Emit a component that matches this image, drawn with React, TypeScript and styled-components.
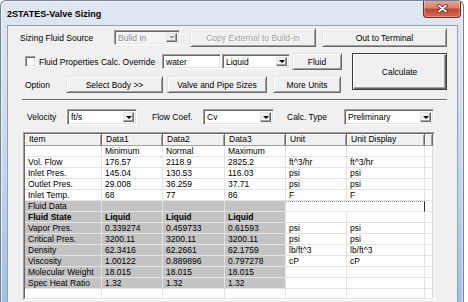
import React from "react";
import styled, { createGlobalStyle } from "styled-components";

const FONT = `"Liberation Sans", Arial, sans-serif`;

const GlobalStyle = createGlobalStyle`
  html, body {
    margin: 0;
    padding: 0;
    background: #fff;
    overflow: hidden;
    font-family: ${FONT};
  }
`;

const Window = styled.div`
  width: 464px;
  height: 302px;
  box-sizing: border-box;
  border: 1px solid #6f8297;
  border-bottom: none;
  border-radius: 6px 6px 0 0;
  background: linear-gradient(180deg, #dfe7f0 0%, #d6e0eb 30%, #c2d4e8 60%, #a2c0e4 100%);
  box-shadow: inset 1px 1px 0 rgba(255, 255, 255, 0.7), inset -1px 0 0 rgba(255, 255, 255, 0.6);
  display: flex;
  flex-direction: column;
  overflow: hidden;
`;

const TitleBar = styled.div`
  height: 24px;
  flex: none;
  display: flex;
  align-items: flex-start;
  justify-content: space-between;
  padding-left: 6px;
`;

const Title = styled.span`
  font: bold 9px ${FONT};
  line-height: 10px;
  color: #000;
  margin-top: 8px;
`;

const CloseButton = styled.div`
  width: 38px;
  height: 18px;
  box-sizing: border-box;
  margin: -1px 2px 0 0;
  border: 1px solid #6b2a22;
  border-top: none;
  border-radius: 0 0 4px 4px;
  background: linear-gradient(180deg, #eaa99b 0%, #d98270 45%, #c2462f 55%, #d06b54 100%);
  box-shadow: inset 0 0 0 1px rgba(255, 255, 255, 0.3);
  display: flex;
  align-items: center;
  justify-content: center;
`;

const Client = styled.div`
  flex: 1;
  min-height: 0;
  overflow: hidden;
  margin: 0 5px 0 6px;
  border: 1px solid #8ea2b8;
  border-bottom: none;
  background: #f0f0f0;
  padding: 2px 0 0 12px;
  color: #000;
  font: 8.5px ${FONT};
`;

const Row = styled.div<{ $h: number; $ml?: number; $mt?: number }>`
  display: flex;
  align-items: center;
  height: ${(p) => p.$h}px;
  margin-left: ${(p) => p.$ml ?? 0}px;
  margin-top: ${(p) => p.$mt ?? 0}px;
`;

const OptionBlock = styled.div`
  display: flex;
  align-items: flex-start;
  margin-top: 6px;
`;

const OptionRows = styled.div`
  display: flex;
  flex-direction: column;
  gap: 6px;
`;

const Label = styled.span<{ $w: number; $ml?: number }>`
  width: ${(p) => p.$w}px;
  margin-left: ${(p) => p.$ml ?? 0}px;
  flex: none;
  white-space: nowrap;
  line-height: 10px;
`;

const PushButton = styled.div<{ $w: number; $h: number; $ml?: number; $disabled?: boolean }>`
  width: ${(p) => p.$w}px;
  height: ${(p) => p.$h}px;
  margin-left: ${(p) => p.$ml ?? 0}px;
  flex: none;
  box-sizing: border-box;
  background: #f0f0f0;
  border: 1px solid;
  border-color: #e3e3e3 #696969 #696969 #e3e3e3;
  box-shadow: inset 1px 1px 0 #fff, inset -1px -1px 0 #a0a0a0;
  display: flex;
  align-items: center;
  justify-content: center;
  white-space: nowrap;
  color: ${(p) => (p.$disabled ? "#a0a0a0" : "#000")};
  text-shadow: ${(p) => (p.$disabled ? "1px 1px 0 #fff" : "none")};
`;

const DefaultButton = styled(PushButton)`
  border-color: #3c3c3c;
  box-shadow: inset 1px 1px 0 #fff, inset -1px -1px 0 #696969, inset -2px -2px 0 #a0a0a0;
`;

const Sunken = styled.div<{ $w: number; $h: number; $ml?: number; $disabled?: boolean }>`
  width: ${(p) => p.$w}px;
  height: ${(p) => p.$h}px;
  margin-left: ${(p) => p.$ml ?? 0}px;
  flex: none;
  box-sizing: border-box;
  background: ${(p) => (p.$disabled ? "#f4f4f4" : "#fff")};
  border: 1px solid;
  border-color: #a0a0a0 #fff #fff #a0a0a0;
  box-shadow: inset 1px 1px 0 #696969, inset -1px -1px 0 #e3e3e3;
  padding: 2px;
  display: flex;
  align-items: stretch;
`;

const FieldText = styled.span<{ $disabled?: boolean }>`
  flex: 1;
  padding-left: 1px;
  line-height: ${(p) => (p.$disabled ? 10 : 11)}px;
  white-space: nowrap;
  overflow: hidden;
  color: ${(p) => (p.$disabled ? "#8c8c8c" : "#000")};
`;

const DropArrow = styled.span<{ $disabled?: boolean }>`
  width: 11px;
  flex: none;
  box-sizing: border-box;
  background: #f0f0f0;
  border: 1px solid;
  border-color: #e3e3e3 #696969 #696969 #e3e3e3;
  box-shadow: inset -1px -1px 0 #a0a0a0;
  display: flex;
  align-items: center;
  justify-content: center;
  &::after {
    content: "";
    border-left: 3px solid transparent;
    border-right: 3px solid transparent;
    border-top: 3px solid ${(p) => (p.$disabled ? "#a0a0a0" : "#000")};
  }
`;

const CheckBox = styled.span`
  width: 11px;
  height: 11px;
  flex: none;
  box-sizing: border-box;
  margin-left: 5px;
  background: #fff;
  border: 1px solid;
  border-color: #a0a0a0 #fff #fff #a0a0a0;
  box-shadow: inset 1px 1px 0 #696969, inset -1px -1px 0 #e3e3e3;
`;

const Separator = styled.div`
  width: 425px;
  height: 2px;
  box-sizing: border-box;
  margin: 6px 0 0 2px;
  border-top: 1px solid #6d6d6d;
  border-bottom: 1px solid #fff;
`;

const Grid = styled.div`
  width: 412px;
  height: 168px;
  box-sizing: border-box;
  margin: 7px 0 0 3px;
  border: 1px solid;
  border-color: #a0a0a0 #fff #fff #a0a0a0;
  background: #fff;
`;

const GridBody = styled.div`
  height: 100%;
  box-sizing: border-box;
  border: 1px solid;
  border-color: #696969 #e3e3e3 #e3e3e3 #696969;
  display: grid;
  grid-template-columns: 77px 61px 62px 61px 61px 78px 8px;
  grid-template-rows: 12px;
  grid-auto-rows: 11px;
  overflow: hidden;
`;

const HeaderCell = styled.div`
  box-sizing: border-box;
  background: #f0f0f0;
  border-right: 1px solid #696969;
  border-bottom: 1px solid #a0a0a0;
  box-shadow: inset 1px 1px 0 #fff, inset -1px 0 0 #a0a0a0;
  padding-left: 4px;
  line-height: 11px;
  white-space: nowrap;
  overflow: hidden;
`;

const Cell = styled.div<{ $gray?: boolean; $bold?: boolean }>`
  box-sizing: border-box;
  background: ${(p) => (p.$gray ? "#c3c3c3" : "#fff")};
  border-right: 1px solid #e3e3e3;
  border-bottom: 1px solid #e3e3e3;
  padding-left: 3px;
  line-height: 10px;
  font-weight: ${(p) => (p.$bold ? "bold" : "normal")};
  white-space: nowrap;
  overflow: hidden;
`;

const FocusCell = styled(Cell)`
  grid-column: span 2;
  border-top: 1px dotted #8a8a8a;
  border-right: 1px solid #2a2a2a;
  line-height: 9px;
`;

type GridRow = {
  cells: string[];
  gray?: boolean;
  bold?: boolean;
  focus?: boolean;
};

const headers = ["Item", "Data1", "Data2", "Data3", "Unit", "Unit Display", ""];

const rows: GridRow[] = [
  { cells: ["", "Minimum", "Normal", "Maximum", "", ""] },
  { cells: ["Vol. Flow", "176.57", "2118.9", "2825.2", "ft^3/hr", "ft^3/hr"] },
  { cells: ["Inlet Pres.", "145.04", "130.53", "116.03", "psi", "psi"] },
  { cells: ["Outlet Pres.", "29.008", "36.259", "37.71", "psi", "psi"] },
  { cells: ["Inlet Temp.", "68", "77", "86", "F", "F"] },
  { cells: ["Fluid Data", "", "", "", "", ""], gray: true, focus: true },
  { cells: ["Fluid State", "Liquid", "Liquid", "Liquid", "", ""], gray: true, bold: true },
  { cells: ["Vapor Pres.", "0.339274", "0.459733", "0.61593", "psi", "psi"], gray: true },
  { cells: ["Critical Pres.", "3200.11", "3200.11", "3200.11", "psi", "psi"], gray: true },
  { cells: ["Density", "62.3416", "62.2661", "62.1759", "lb/ft^3", "lb/ft^3"], gray: true },
  { cells: ["Viscosity", "1.00122", "0.889896", "0.797278", "cP", "cP"], gray: true },
  { cells: ["Molecular Weight", "18.015", "18.015", "18.015", "", ""], gray: true },
  { cells: ["Spec Heat Ratio", "1.32", "1.32", "1.32", "", ""], gray: true },
  { cells: ["", "", "", "", "", ""] },
];

function Combo({ w, h, value, ml, disabled }: { w: number; h: number; value: string; ml?: number; disabled?: boolean }) {
  return (
    <Sunken $w={w} $h={h} $ml={ml} $disabled={disabled}>
      <FieldText $disabled={disabled}>{value}</FieldText>
      <DropArrow $disabled={disabled} />
    </Sunken>
  );
}

function CloseGlyph() {
  return (
    <svg width="11" height="9" viewBox="0 0 11 9">
      <path d="M2 1.5 L9 7.5 M9 1.5 L2 7.5" stroke="#5a1d16" strokeWidth="3.4" strokeLinecap="round" />
      <path d="M2 1.5 L9 7.5 M9 1.5 L2 7.5" stroke="#fff" strokeWidth="1.8" strokeLinecap="round" />
    </svg>
  );
}

export default function App() {
  return (
    <>
      <GlobalStyle />
      <Window>
        <TitleBar>
          <Title>2STATES-Valve Sizing</Title>
          <CloseButton>
            <CloseGlyph />
          </CloseButton>
        </TitleBar>
        <Client>
          <Row $h={19}>
            <Label $w={94}>Sizing Fluid Source</Label>
            <Combo w={66} h={15} value="Bulid In" disabled />
            <PushButton $w={126} $h={19} $ml={10} $disabled>
              Copy External to Build-in
            </PushButton>
            <PushButton $w={125} $h={19} $ml={6}>
              Out to Terminal
            </PushButton>
          </Row>

          <OptionBlock>
            <OptionRows>
              <Row $h={17}>
                <CheckBox />
                <Label $w={123} $ml={3}>
                  Fluid Properties Calc. Override
                </Label>
                <Sunken $w={59} $h={15}>
                  <FieldText>water</FieldText>
                </Sunken>
                <Combo w={68} h={15} value="Liquid" ml={1} />
                <PushButton $w={50} $h={17} $ml={2}>
                  Fluid
                </PushButton>
              </Row>
              <Row $h={17}>
                <Label $w={41} $ml={5}>
                  Option
                </Label>
                <PushButton $w={97} $h={17}>
                  Select Body &gt;&gt;
                </PushButton>
                <PushButton $w={100} $h={17} $ml={4}>
                  Valve and Pipe Sizes
                </PushButton>
                <PushButton $w={68} $h={17} $ml={6}>
                  More Units
                </PushButton>
              </Row>
            </OptionRows>
            <DefaultButton $w={95} $h={37} $ml={10}>
              Calculate
            </DefaultButton>
          </OptionBlock>

          <Separator />

          <Row $h={16} $ml={7} $mt={8}>
            <Label $w={40}>Velocity</Label>
            <Combo w={70} h={16} value="ft/s" />
            <Label $w={51} $ml={15}>
              Flow Coef.
            </Label>
            <Combo w={71} h={16} value="Cv" />
            <Label $w={57} $ml={13}>
              Calc. Type
            </Label>
            <Combo w={90} h={16} value="Preliminary" />
          </Row>

          <Grid>
            <GridBody>
              {headers.map((h, i) => (
                <HeaderCell key={"h" + i}>{h}</HeaderCell>
              ))}
              {rows.map((r, ri) => (
                <React.Fragment key={"r" + ri}>
                  {r.cells.slice(0, 4).map((c, ci) => (
                    <Cell key={ci} $gray={r.gray} $bold={r.bold}>
                      {c}
                    </Cell>
                  ))}
                  {r.focus ? (
                    <FocusCell />
                  ) : (
                    <>
                      <Cell>{r.cells[4]}</Cell>
                      <Cell>{r.cells[5]}</Cell>
                    </>
                  )}
                  <Cell />
                </React.Fragment>
              ))}
            </GridBody>
          </Grid>
        </Client>
      </Window>
    </>
  );
}
